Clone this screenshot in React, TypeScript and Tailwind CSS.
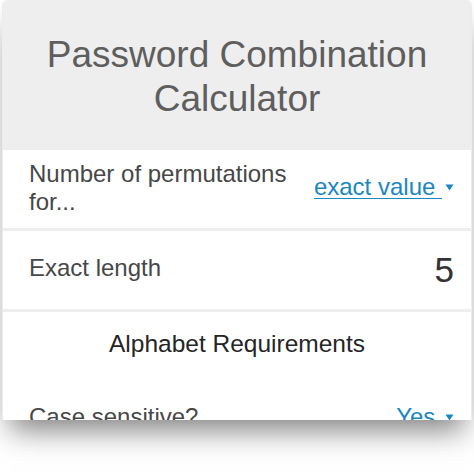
import React from 'react';

function Caret() {
  return (
    <svg width="9" height="7" viewBox="0 0 9 7" className="inline-block ml-[3px] mb-[2px]">
      <path d="M0.5 0.5 L8.5 0.5 L4.5 6.5 Z" fill="#1b87c0" />
    </svg>
  );
}

export default function App() {
  return (
    <div
      className="w-[474px] h-[474px] bg-white overflow-hidden"
      style={{ fontFamily: '"Liberation Sans", Arial, sans-serif' }}
    >
      <div className="mx-[2px] h-[420px] rounded-t-[6px] overflow-hidden bg-[#eeeeee] flex flex-col gap-[3px] border-x border-[#ececec] shadow-[0_18px_28px_-8px_rgba(0,0,0,0.5)]">
        {/* Header */}
        <div className="shrink-0 pt-[33px] pb-[26px] text-center text-[37px] leading-[44px] text-[#5e5e5e]">
          Password Combination
          <br />
          Calculator
        </div>

        {/* Permutations for */}
        <div className="shrink-0 bg-white h-[78px] flex items-center justify-between pl-[26px] pr-[17px]">
          <div className="text-[24px] leading-[28px] text-[#474747] mb-[3px]">
            Number of permutations
            <br />
            for...
          </div>
          <div className="text-[24px] leading-[28px] text-[#1b87c0] mb-[4px] whitespace-nowrap">
            <span className="underline decoration-1 underline-offset-[3px]">exact value </span>
            <Caret />
          </div>
        </div>

        {/* Exact length */}
        <div className="shrink-0 bg-white h-[78px] flex items-center justify-between pl-[26px] pr-[17px]">
          <span className="text-[24px] leading-[28px] text-[#474747] mb-[5px]">Exact length</span>
          <span className="text-[35px] leading-[40px] text-[#333333]">5</span>
        </div>

        {/* Alphabet requirements */}
        <div className="shrink-0 bg-white flex-1 flex flex-col">
          <div className="pt-[18px] text-center text-[24.5px] leading-[28px] text-[#252525]">
            Alphabet Requirements
          </div>
          <div className="mt-[45px] flex items-center justify-between pl-[26px] pr-[17px]">
            <span className="text-[24px] leading-[28px] text-[#474747]">Case sensitive?</span>
            <span className="text-[24px] leading-[28px] text-[#1b87c0] whitespace-nowrap">
              Yes <Caret />
            </span>
          </div>
        </div>
      </div>
    </div>
  );
}
